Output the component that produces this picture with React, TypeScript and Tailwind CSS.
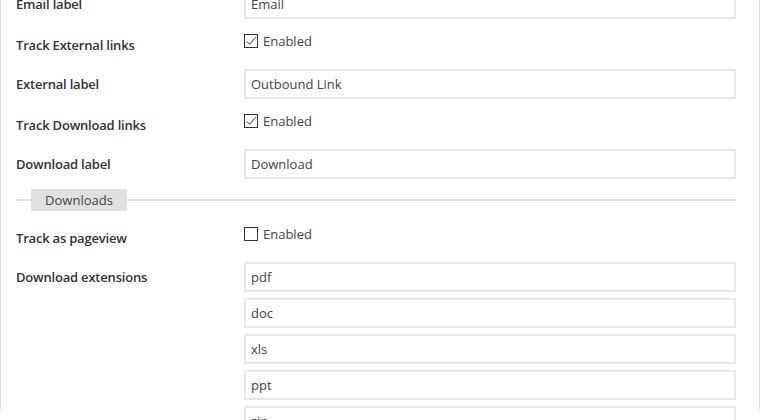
import React from "react";

const FONT = { fontFamily: '"Open Sans", "Noto Sans", sans-serif' };

function CheckRow({ label, checked }: { label: string; checked: boolean }) {
  return (
    <div className="flex h-[30px] mb-[10px]">
      <div className="w-[228px] shrink-0 pt-[6px] text-[13px] leading-[20px] font-semibold tracking-[-0.2px] text-[#333]">
        {label}
      </div>
      <div className="flex items-center gap-[5px] pt-[2px] h-[20px] box-content">
        <span className="flex h-[14px] w-[14px] items-center justify-center border border-[#333] bg-white">
          {checked && (
            <svg width="12" height="12" viewBox="0 0 12 12" fill="none">
              <path d="M1.5 6.2 L4.6 9.3 L10.6 2.4" stroke="#333" strokeWidth="1" />
            </svg>
          )}
        </span>
        <span className="text-[13px] leading-[20px] text-[#444]">Enabled</span>
      </div>
    </div>
  );
}

function InputRow({ label, value }: { label: string; value: string }) {
  return (
    <div className="flex h-[30px] mb-[10px]">
      <div className="w-[228px] shrink-0 pt-[5px] text-[13px] leading-[20px] font-semibold tracking-[-0.2px] text-[#333]">
        {label}
      </div>
      <div className="flex-1 border-2 border-[#e8e8e8] px-[5px] text-[13px] leading-[26px] text-[#444]">
        {value}
      </div>
    </div>
  );
}

export default function App() {
  return (
    <div className="h-[420px] overflow-hidden bg-white" style={FONT}>
      <div className="h-full border-l border-r border-[#dcdcdc] pl-[15px] pr-[23px]">
        <div className="-mt-[11px]">
          <InputRow label="Email label" value="Email" />
          <CheckRow label="Track External links" checked />
          <InputRow label="External label" value="Outbound Link" />
          <CheckRow label="Track Download links" checked />
          <InputRow label="Download label" value="Download" />

          {/* Downloads fieldset */}
          <div className="relative flex items-center h-[22px] mt-[1px] mb-[11px]">
            <div className="absolute inset-x-0 top-[10px] h-[2px] bg-[#e0e0e0]" />
            <div className="relative ml-[15px] w-[96px] h-[22px] bg-[#e0e0e0] text-center text-[13px] leading-[22px] text-[#444]">
              Downloads
            </div>
          </div>

          <CheckRow label="Track as pageview" checked={false} />

          <div className="flex">
            <div className="w-[228px] shrink-0 pt-[5px] text-[13px] leading-[20px] font-semibold tracking-[-0.2px] text-[#333]">
              Download extensions
            </div>
            <div className="flex-1 flex flex-col gap-[6px]">
              {["pdf", "doc", "xls", "ppt", "zip"].map((ext) => (
                <div
                  key={ext}
                  className="h-[30px] border-2 border-[#e8e8e8] px-[5px] text-[13px] leading-[26px] text-[#444]"
                >
                  {ext}
                </div>
              ))}
            </div>
          </div>
        </div>
      </div>
    </div>
  );
}
